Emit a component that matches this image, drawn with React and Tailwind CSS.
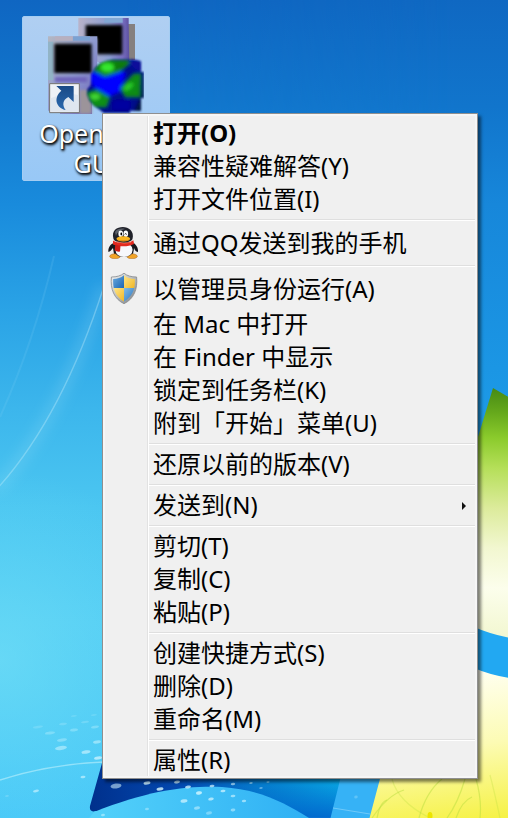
import React from "react";

const SPARKLES = [
  [61, 748, 6, 2, 0.5], [62, 740, 5, 1.6, 0.35], [50, 733, 5, 1.4, 0.3], [74, 730, 4, 1.4, 0.3],
  [63, 724, 4, 1.2, 0.2], [38, 727, 5, 1.2, 0.18], [85, 722, 4, 1.1, 0.2], [95, 727, 4, 1.3, 0.3],
  [86, 752, 4.5, 1.7, 0.6], [97, 742, 4, 1.5, 0.5], [98, 758, 4, 1.6, 0.7], [36, 791, 3, 1.3, 0.6],
  [83, 777, 2.5, 1.2, 0.6], [74, 716, 3, 1, 0.15], [94, 715, 3, 1, 0.15], [7, 796, 2, 1, 0.2],
  [116, 786, 5.5, 2.4, 0.55], [147, 783, 3.5, 1.6, 0.8], [160, 789, 3.5, 1.6, 0.8], [177, 782, 3, 1.4, 0.75],
  [188, 787, 3, 1.4, 0.75], [199, 793, 3, 1.7, 0.8], [184, 801, 3.5, 1.7, 0.7], [197, 808, 3, 1.6, 0.5],
  [211, 799, 2.8, 1.5, 0.7], [212, 786, 2.5, 1.3, 0.7], [223, 791, 2.5, 1.3, 0.7], [233, 784, 2.2, 1.2, 0.6],
  [233, 796, 2.4, 1.3, 0.6], [244, 801, 2.2, 1.3, 0.6], [233, 810, 2.4, 1.4, 0.5], [209, 813, 3, 1.6, 0.4],
  [251, 783, 1.8, 1, 0.5], [261, 788, 1.8, 1, 0.4], [268, 782, 1.6, 1, 0.4], [147, 809, 2, 1.3, 0.4],
  [103, 815, 2, 1.2, 0.5], [356, 797, 1.8, 1.4, 0.25],
];

function Wallpaper() {
  return (
    <svg className="absolute inset-0 h-full w-full" viewBox="0 0 508 818" preserveAspectRatio="none" aria-hidden="true">
      <defs>
        <linearGradient id="sky" x1="0" y1="0" x2="0" y2="1">
          <stop offset="0" stopColor="#0f66c2" />
          <stop offset="0.12" stopColor="#1176cc" />
          <stop offset="0.25" stopColor="#198bdc" />
          <stop offset="0.38" stopColor="#2aa3e6" />
          <stop offset="0.5" stopColor="#3cb6ec" />
          <stop offset="0.62" stopColor="#4bc6f1" />
          <stop offset="0.76" stopColor="#53cdf4" />
          <stop offset="1" stopColor="#48c8f8" />
        </linearGradient>
        <radialGradient id="glow" gradientUnits="userSpaceOnUse" cx="0" cy="660" r="190">
          <stop offset="0" stopColor="#74e0f6" stopOpacity="0.6" />
          <stop offset="1" stopColor="#6adcf6" stopOpacity="0" />
        </radialGradient>
        <linearGradient id="skyRight" x1="0" y1="0" x2="0" y2="1">
          <stop offset="0" stopColor="#0f68c2" />
          <stop offset="0.13" stopColor="#1175cc" />
          <stop offset="0.25" stopColor="#1787da" />
          <stop offset="0.45" stopColor="#1b96e4" />
          <stop offset="0.8" stopColor="#24abf2" />
          <stop offset="1" stopColor="#36b8f8" />
        </linearGradient>
        <linearGradient id="fade" x1="0" y1="0" x2="1" y2="0">
          <stop offset="0.25" stopColor="#000" />
          <stop offset="0.9" stopColor="#fff" />
        </linearGradient>
        <mask id="fadeMask"><rect width="508" height="818" fill="url(#fade)" /></mask>
        <linearGradient id="leaf" gradientUnits="userSpaceOnUse" x1="500" y1="388" x2="492" y2="638">
          <stop offset="0" stopColor="#468a14" />
          <stop offset="0.1" stopColor="#66a91c" />
          <stop offset="0.2" stopColor="#8bcb2c" />
          <stop offset="0.32" stopColor="#b5df59" />
          <stop offset="0.48" stopColor="#dceb9b" />
          <stop offset="0.64" stopColor="#f2f7d0" />
          <stop offset="0.8" stopColor="#fcfeec" />
          <stop offset="1" stopColor="#f2f7d0" />
        </linearGradient>
        <linearGradient id="meadow" gradientUnits="userSpaceOnUse" x1="470" y1="670" x2="490" y2="818">
          <stop offset="0" stopColor="#fffff2" />
          <stop offset="0.5" stopColor="#fcfbb4" />
          <stop offset="1" stopColor="#f6f248" />
        </linearGradient>
        <linearGradient id="petal" gradientUnits="userSpaceOnUse" x1="90" y1="800" x2="345" y2="775">
          <stop offset="0" stopColor="#00308c" />
          <stop offset="0.35" stopColor="#0348b0" />
          <stop offset="0.65" stopColor="#0579cc" />
          <stop offset="1" stopColor="#08a3e2" />
        </linearGradient>
        <linearGradient id="petalShade" gradientUnits="userSpaceOnUse" x1="0" y1="785" x2="0" y2="818">
          <stop offset="0" stopColor="#0062cc" stopOpacity="0" />
          <stop offset="1" stopColor="#0062cc" stopOpacity="0.85" />
        </linearGradient>
        <linearGradient id="dome" x1="0" y1="0" x2="1" y2="0">
          <stop offset="0" stopColor="#54d2fa" />
          <stop offset="1" stopColor="#2fb0f4" />
        </linearGradient>
        <filter id="soft"><feGaussianBlur stdDeviation="6" /></filter>
        <filter id="dust"><feGaussianBlur stdDeviation="0.6" /></filter>
      </defs>
      <rect width="508" height="818" fill="url(#sky)" />
      <rect width="508" height="818" fill="url(#glow)" />
      <rect width="508" height="818" fill="url(#skyRight)" mask="url(#fadeMask)" />
      <path d="M478 600H508V700H478Z" fill="#22a8f2" />
      <path d="M-4 490Q62 418 104 286" fill="none" stroke="#b5edfa" strokeOpacity="0.16" strokeWidth="12" filter="url(#soft)" />
      <path d="M-4 490Q62 418 104 286" fill="none" stroke="#c9f1fb" strokeOpacity="0.35" strokeWidth="1.4" />
      <path d="M0 417Q34 342 54 256" fill="none" stroke="#8fd8f5" strokeOpacity="0.15" strokeWidth="2" />
      <path d="M0 780Q50 764 104 762" fill="none" stroke="#d4f7fd" strokeOpacity="0.5" strokeWidth="1.5" />
      <path d="M104 756L90 806Q89 813 96 811L350 818V770Z" fill="url(#petal)" />
      <path d="M210 780H342V818H210Z" fill="url(#petalShade)" />
      <path d="M94 812C150 790 185 786 222 787C262 790 284 803 309 818V822H86Z" fill="url(#dome)" />
      <path d="M341 776L330 820H400V776Z" fill="#36b2f6" />
      <path d="M333 808L370 814" stroke="#a8e0fc" strokeOpacity="0.5" />
      <path d="M493 388L510 398V638Q490 634 474 627V450Z" fill="url(#leaf)" />
      <path d="M381 775L400 700L474 668Q490 675 510 678V820H369Z" fill="url(#meadow)" />
      <g fill="none" stroke="#b9de40" strokeWidth="1.2" strokeOpacity="0.5">
        <path d="M372 818Q388 795 404 790" />
        <path d="M377 818Q380 802 387 800" />
        <path d="M419 818Q426 792 442 779" />
        <path d="M447 818Q458 803 465 779" />
        <path d="M456 818Q462 801 472 797" />
        <path d="M480 818Q482 800 476 779" />
        <path d="M392 779Q398 802 430 818" strokeOpacity="0.3" />
        <path d="M500 818Q494 790 490 775" strokeOpacity="0.3" />
      </g>
      <ellipse cx="430" cy="816" rx="2.5" ry="4" fill="#ece500" />
      <g fill="#d8f7ff" filter="url(#dust)">
        {SPARKLES.map(([x, y, rx, ry, o]) => (
          <ellipse key={`${x}-${y}`} cx={x} cy={y} rx={rx} ry={ry} opacity={o} transform={`rotate(-8 ${x} ${y})`} />
        ))}
      </g>
    </svg>
  );
}

function NetworkIcon() {
  return (
    <svg className="h-24 w-24" viewBox="144 54 288 288" aria-hidden="true">
      <defs>
        <linearGradient id="caseBack" x1="0" y1="0" x2="1" y2="0">
          <stop offset="0" stopColor="#b9b3c9" />
          <stop offset="0.6" stopColor="#8b9ed2" />
          <stop offset="0.86" stopColor="#7b72c4" />
          <stop offset="1" stopColor="#5b4fa0" />
        </linearGradient>
        <linearGradient id="caseFront" x1="0" y1="0" x2="1" y2="1">
          <stop offset="0" stopColor="#b4b7c2" />
          <stop offset="0.5" stopColor="#8f9bd0" />
          <stop offset="1" stopColor="#6b5fb8" />
        </linearGradient>
        <filter id="melt" x="-20%" y="-20%" width="140%" height="140%"><feGaussianBlur stdDeviation="4" /></filter>
        <filter id="globeEdge"><feGaussianBlur stdDeviation="2.5" /></filter>
        <clipPath id="globeClip">
          <path d="M274 222L284 204L300 190L320 182L340 178H400L423 184V216H432V294H423V332H390V340H312L300 330L282 318L268 302L260 282L262 268L272 256Z" />
        </clipPath>
        <linearGradient id="arrow" x1="0" y1="0" x2="0" y2="1">
          <stop offset="0" stopColor="#1a4a86" />
          <stop offset="1" stopColor="#2a68ae" />
        </linearGradient>
      </defs>
      <path d="M370 72H405V180H370Z" fill="#85807f" />
      <path d="M235 54H386V72L388 190H300L235 150Z" fill="url(#caseBack)" />
      <path d="M315 54H368V68H312Z" fill="#82a8d4" />
      <path d="M262 80H362V158H296V110H262Z" fill="#000" stroke="#000" strokeWidth="10" filter="url(#melt)" />
      <path d="M144 109H292V200L276 225V342H180V332H144V242Z" fill="url(#caseFront)" />
      <path d="M144 125H160V240H144Z" fill="#92b4c6" />
      <path d="M165 109H218V122H165Z" fill="#b7b0bf" />
      <path d="M219 109H270V122H219Z" fill="#7ba2d2" />
      <path d="M168 136H270V214H168Z" fill="#000" stroke="#000" strokeWidth="10" filter="url(#melt)" />
      <path d="M165 231H262V247H165Z" fill="#6e64ba" filter="url(#melt)" />
      <path d="M238 270H275V342H238Z" fill="#9c949a" filter="url(#melt)" />
      <g filter="url(#globeEdge)">
        <g clipPath="url(#globeClip)">
          <path d="M250 170H440V350H250Z" fill="#050a8c" />
          <g filter="url(#melt)">
            <path d="M264 222L330 205L378 218L360 275L325 290L280 260Z" fill="#0505ff" />
            <path d="M280 212L304 180H385L390 190L360 215L315 230Z" fill="#0b8a10" />
            <ellipse cx="322" cy="202" rx="20" ry="13" fill="#36e82e" />
            <path d="M345 188L385 184L370 205L340 214Z" fill="#087a10" />
            <path d="M424 220L400 222L360 265L376 292H420Z" fill="#0a8c12" />
            <ellipse cx="385" cy="260" rx="17" ry="9" fill="#25cb27" transform="rotate(-35 385 260)" />
            <path d="M258 278L290 268L330 292L320 322H280Z" fill="#079012" />
            <ellipse cx="285" cy="290" rx="15" ry="9" fill="#42d836" />
            <path d="M258 308L275 330L310 342L280 345Z" fill="#052005" />
            <path d="M432 215V340H400L422 290Z" fill="#031340" />
            <path d="M340 300H390V330H335Z" fill="#0000a0" />
            <path d="M385 184H420V215L400 205Z" fill="#07109c" />
          </g>
        </g>
      </g>
      <path d="M149 251H238V338H149Z" fill="#eef1f6" stroke="#74716f" strokeWidth="3" />
      <path d="M152 295Q195 275 235 285V335H152Z" fill="#dfe6ef" />
      <path d="M169 258H221V306L205 291C188 300 186 315 197 330C171 325 157 296 184 272Z" fill="url(#arrow)" />
    </svg>
  );
}

function PenguinIcon() {
  return (
    <svg className="h-8 w-8" viewBox="0 0 32 32" aria-hidden="true">
      <path d="M7 16C3 17 1 21 1.4 25C3 25 5 22 6 21L7 27H26L27 21C28 24 30 25 31 25C31.5 21 29 17 25 15Z" fill="#15161c" />
      <ellipse cx="8" cy="29.3" rx="5.3" ry="2.5" fill="#f2a428" stroke="#a06428" strokeWidth="0.5" />
      <ellipse cx="25" cy="29.3" rx="5.3" ry="2.5" fill="#f2a428" stroke="#a06428" strokeWidth="0.5" />
      <path d="M7 18H26C28 26 24 30 16.5 30C9 30 6 25 7 18Z" fill="#1b1c22" />
      <ellipse cx="17" cy="22.8" rx="8.6" ry="7.2" fill="#f7f8fc" />
      <path d="M6.5 12C4 3.5 10 0 15.8 0S27.5 4 25.5 12C23 17 9 17 6.5 12Z" fill="#20222a" />
      <path d="M8 5C10 1.5 15 1 18 2C14 3 10 5 9 9Z" fill="#5b6069" />
      <ellipse cx="13.7" cy="6.8" rx="2.3" ry="3.2" fill="#fff" />
      <ellipse cx="18.8" cy="6.8" rx="2.3" ry="3.2" fill="#fff" />
      <ellipse cx="14.3" cy="7" rx="0.9" ry="1.4" fill="#000" />
      <path d="M17.7 7.4Q18.6 5.8 19.7 7.4" fill="none" stroke="#000" strokeWidth="0.9" />
      <ellipse cx="16.3" cy="11.8" rx="6.8" ry="2.6" fill="#fab51e" />
      <path d="M10 12.2Q16 14.6 23 12.2Q16 16 10 12.2Z" fill="#c9720e" />
      <path d="M6 13.4C12 17 21 17 26.4 13.2L27 17C21 20 13 20 6 17.5Z" fill="#e32a20" />
      <path d="M8.3 17.5L13.5 18.6L13 24.5Q10 25 7.7 23.5Z" fill="#cc1d18" />
      <path d="M9.8 14.8Q17 17.4 24 15.4" stroke="#fa6a52" strokeWidth="0.8" fill="none" />
    </svg>
  );
}

function ShieldIcon() {
  return (
    <svg className="h-8 w-8" viewBox="-1 1 32 32" aria-hidden="true">
      <defs>
        <linearGradient id="rim" x1="0" y1="0" x2="1" y2="1">
          <stop offset="0" stopColor="#f3f5f6" />
          <stop offset="0.5" stopColor="#b9bdc0" />
          <stop offset="1" stopColor="#777b7f" />
        </linearGradient>
        <linearGradient id="blueQ" x1="0" y1="0" x2="1" y2="1">
          <stop offset="0" stopColor="#7ebbe9" />
          <stop offset="1" stopColor="#1b66b4" />
        </linearGradient>
        <linearGradient id="goldQ" x1="0" y1="0" x2="1" y2="1">
          <stop offset="0" stopColor="#ffeb96" />
          <stop offset="1" stopColor="#efb21c" />
        </linearGradient>
        <clipPath id="shieldClip"><path d="M16 3.2C13 5.8 9.4 6.8 5.2 7C4.6 16 7 24.5 16 29.6C25 24.5 27.4 16 26.8 7C22.6 6.8 19 5.8 16 3.2Z" /></clipPath>
      </defs>
      <path d="M16 1.2C13 3.8 8.6 5 3.4 5C2.2 17 6 27 16 31.7C26 27 29.8 17 28.6 5C23.4 5 19 3.8 16 1.2Z" fill="url(#rim)" stroke="#85888a" strokeWidth="0.8" />
      <g clipPath="url(#shieldClip)">
        <path d="M3 0H16V16H3Z" fill="url(#blueQ)" />
        <path d="M16 0H29V16H16Z" fill="url(#goldQ)" />
        <path d="M3 16H16V32H3Z" fill="url(#goldQ)" />
        <path d="M16 16H29V32H16Z" fill="url(#blueQ)" />
      </g>
    </svg>
  );
}

const GROUPS = [
  [
    { label: "打开(O)", bold: true },
    { label: "兼容性疑难解答(Y)" },
    { label: "打开文件位置(I)" },
  ],
  [{ label: "通过QQ发送到我的手机", icon: PenguinIcon }],
  [
    { label: "以管理员身份运行(A)", icon: ShieldIcon },
    { label: "在 Mac 中打开" },
    { label: "在 Finder 中显示" },
    { label: "锁定到任务栏(K)" },
    { label: "附到「开始」菜单(U)" },
  ],
  [{ label: "还原以前的版本(V)" }],
  [{ label: "发送到(N)", submenu: true }],
  [{ label: "剪切(T)" }, { label: "复制(C)" }, { label: "粘贴(P)" }],
  [{ label: "创建快捷方式(S)" }, { label: "删除(D)" }, { label: "重命名(M)" }],
  [{ label: "属性(R)" }],
];

function MenuItem({ label, bold, icon: Icon, submenu }) {
  return (
    <button
      type="button"
      role="menuitem"
      aria-haspopup={submenu ? "menu" : undefined}
      className={`flex w-full items-center text-left text-2xl leading-8 text-black ${Icon ? "h-[38px]" : "h-[33px]"} ${bold ? "font-bold" : "font-normal"}`}
    >
      <span className="flex w-[50px] shrink-0 pl-1">{Icon && <Icon />}</span>
      <span className="grow whitespace-nowrap pb-px">{label}</span>
      {submenu && (
        <svg className="mr-2.5 h-2 w-1.5" viewBox="0 0 6 8" aria-hidden="true">
          <path d="M1 0L5 4L1 8Z" fill="#111" />
        </svg>
      )}
    </button>
  );
}

function ContextMenu() {
  return (
    <div
      role="menu"
      className="absolute left-[102px] top-[113px] w-94 border border-[#8f8f8f] bg-[#f0f0f0] pb-px pt-[3px] shadow-[inset_0_0_0_2px_#f6f6f6,3px_3px_3px_rgba(0,0,0,0.5)]"
    >
      <div className="absolute bottom-0.5 left-11 top-0.5 w-0.5 border-l border-[#e2e2e2] bg-white" />
      {GROUPS.map((items, index) => (
        <React.Fragment key={items[0].label}>
          {index > 0 && (
            <div role="separator" className="ml-[46px] mr-0.5 py-[3px]">
              <div className="h-0.5 border-t border-[#dfdfdf] bg-white" />
            </div>
          )}
          {items.map((item) => (
            <MenuItem key={item.label} {...item} />
          ))}
        </React.Fragment>
      ))}
    </div>
  );
}

export default function App() {
  return (
    <main className="relative min-h-screen overflow-hidden bg-[#1b8bdb] font-['Noto_Sans','Noto_Sans_CJK_SC',sans-serif]" lang="zh-CN">
      <Wallpaper />
      <div className="relative pl-[22px] pt-4">
        <button
          type="button"
          className="flex h-[165px] w-37 flex-col items-center rounded-[2px] border border-[#a4cdf2] bg-linear-to-b from-[#b0cff2] to-[#98c8f6] pt-px"
        >
          <NetworkIcon />
          <span className="mt-1 text-center text-[25px] leading-[30px] text-white [text-shadow:1px_1px_2px_#000,1px_2px_3px_#000]">
            OpenVPN
            <br />
            GUI
          </span>
        </button>
      </div>
      <ContextMenu />
    </main>
  );
}
